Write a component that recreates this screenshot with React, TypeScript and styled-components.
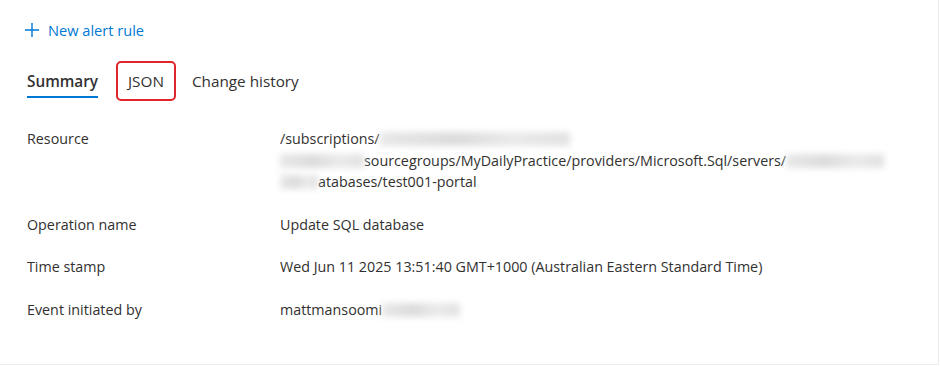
import styled, { createGlobalStyle } from "styled-components";

const GlobalStyle = createGlobalStyle`
  html, body {
    margin: 0;
    padding: 0;
    background: #fff;
  }
  body {
    font-family: "Open Sans", "Noto Sans", sans-serif;
    color: #323130;
  }
`;

const Panel = styled.div`
  box-sizing: border-box;
  width: 939px;
  height: 365px;
  border-right: 1px solid #ececec;
  border-bottom: 1px solid #ececec;
  padding: 20px 0 0 24px;
`;

const NewRuleButton = styled.button`
  display: flex;
  align-items: center;
  gap: 8px;
  border: none;
  background: none;
  padding: 0;
  font-family: inherit;
  font-size: 14.6px;
  color: #0078d4;
  cursor: pointer;
`;

const Tabs = styled.div`
  display: flex;
  align-items: center;
  margin-top: 21px;
  margin-left: 3px;
`;

const Tab = styled.div<{ $active?: boolean; $outlined?: boolean }>`
  position: relative;
  box-sizing: border-box;
  height: 40px;
  display: flex;
  align-items: center;
  font-size: 15.3px;
  color: #323130;
  font-weight: ${(p) => (p.$active ? 600 : 400)};
  padding: ${(p) => (p.$outlined ? "0 10px" : "0")};
  margin-right: ${(p) => (p.$outlined ? "16px" : "18px")};
  border: ${(p) => (p.$outlined ? "2px solid #e0262b" : "none")};
  border-radius: ${(p) => (p.$outlined ? "5px" : "0")};

  &::after {
    content: "";
    display: ${(p) => (p.$active ? "block" : "none")};
    position: absolute;
    left: 0;
    right: 0;
    bottom: 3px;
    height: 2px;
    background: #0078d4;
  }
`;

const Details = styled.div`
  display: grid;
  grid-template-columns: 253px 630px;
  row-gap: 21px;
  margin-top: 27px;
  margin-left: 3px;
  font-size: 14.3px;
  line-height: 21.5px;
`;

const Label = styled.div`
  color: #323130;
`;

const Value = styled.div`
  color: #323130;
`;

const Line = styled.div`
  white-space: nowrap;
`;

const Redacted = styled.span<{ $w: number }>`
  display: inline-block;
  width: ${(p) => p.$w}px;
  height: 14px;
  vertical-align: -2px;
  background: linear-gradient(90deg, #e8e8e8, #dcdcdc 40%, #eaeaea 70%, #e2e2e2);
  filter: blur(3px);
`;

const App = () => {
  return (
    <>
      <GlobalStyle />
      <Panel>
        <NewRuleButton>
          <svg width="16" height="16" viewBox="0 0 16 16">
            <path d="M8 1v14M1 8h14" stroke="#0078d4" strokeWidth="1.4" fill="none" />
          </svg>
          New alert rule
        </NewRuleButton>
        <Tabs>
          <Tab $active>Summary</Tab>
          <Tab $outlined>JSON</Tab>
          <Tab>Change history</Tab>
        </Tabs>
        <Details>
          <Label>Resource</Label>
          <Value>
            <Line>
              /subscriptions/
              <Redacted $w={190} />
            </Line>
            <Line>
              <Redacted $w={84} />
              sourcegroups/MyDailyPractice/providers/Microsoft.Sql/servers/
              <Redacted $w={98} />
            </Line>
            <Line>
              <Redacted $w={38} />
              atabases/test001-portal
            </Line>
          </Value>
          <Label>Operation name</Label>
          <Value>Update SQL database</Value>
          <Label>Time stamp</Label>
          <Value>Wed Jun 11 2025 13:51:40 GMT+1000 (Australian Eastern Standard Time)</Value>
          <Label>Event initiated by</Label>
          <Value>
            mattmansoomi
            <Redacted $w={78} />
          </Value>
        </Details>
      </Panel>
    </>
  );
};

export default App;
